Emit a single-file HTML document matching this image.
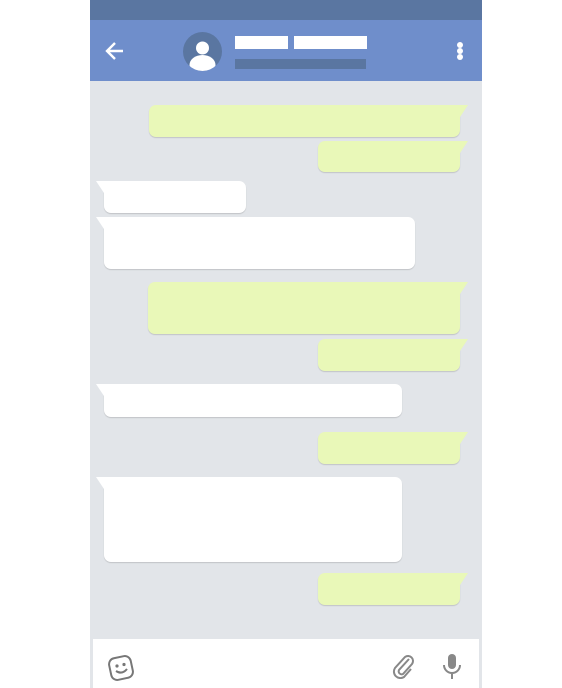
<!DOCTYPE html>
<html><head><meta charset="utf-8"><style>
html,body{margin:0;padding:0;width:562px;height:688px;background:#fff;overflow:hidden;font-family:"Liberation Sans",sans-serif}
.ph{position:absolute;left:90px;top:0;width:392px;height:688px;background:#e2e5e9}
.sb{position:absolute;left:0;top:0;width:392px;height:20px;background:#5a76a1}
.hd{position:absolute;left:0;top:20px;width:392px;height:61px;background:#6f8ecb}
.b{position:absolute;border-radius:7px;box-shadow:0 1px 1px rgba(0,0,0,.15)}
.g{background:#e9f8b8;border-top-right-radius:0}
.w{background:#fff;border-top-left-radius:0}
.g:after{content:"";position:absolute;right:-8px;top:0;width:8px;height:12px;background:#e9f8b8;clip-path:polygon(0 0,100% 0,0 100%)}
.w:before{content:"";position:absolute;left:-8px;top:0;width:8px;height:12px;background:#fff;clip-path:polygon(0 0,100% 0,100% 100%)}
.in{position:absolute;left:3px;top:639px;width:386px;height:49px;background:#fff}
</style></head><body>
<div class="ph">
<div class="sb"></div>
<div class="hd">
<svg style="position:absolute;left:14px;top:20px" width="22" height="22" viewBox="0 0 22 22"><path d="M19 11H4M11 3L3 11l8 8" stroke="#fff" stroke-width="2.4" fill="none"/></svg>
<svg style="position:absolute;left:93px;top:12px" width="39" height="39" viewBox="0 0 39 39"><defs><clipPath id="c"><circle cx="19.5" cy="19.5" r="19.5"/></clipPath></defs><circle cx="19.5" cy="19.5" r="19.5" fill="#5a76a1"/><g clip-path="url(#c)" fill="#fff"><circle cx="19.5" cy="16" r="6.5"/><ellipse cx="19.5" cy="33" rx="13" ry="10"/></g></svg>
<div style="position:absolute;left:145px;top:16px;width:53px;height:13px;background:#fff"></div>
<div style="position:absolute;left:204px;top:16px;width:73px;height:13px;background:#fff"></div>
<div style="position:absolute;left:145px;top:39px;width:131px;height:10px;background:#5a76a1"></div>
<div style="position:absolute;left:367px;top:22px;width:6px;height:6px;border-radius:3px;background:#fff;box-shadow:0 6px 0 #fff,0 12px 0 #fff"></div>
</div>
<div class="b g" style="left:59px;top:105px;width:311px;height:32px"></div>
<div class="b g" style="left:228px;top:141px;width:142px;height:31px"></div>
<div class="b w" style="left:14px;top:181px;width:142px;height:32px"></div>
<div class="b w" style="left:14px;top:217px;width:311px;height:52px"></div>
<div class="b g" style="left:58px;top:282px;width:312px;height:52px"></div>
<div class="b g" style="left:228px;top:339px;width:142px;height:32px"></div>
<div class="b w" style="left:14px;top:384px;width:298px;height:33px"></div>
<div class="b g" style="left:228px;top:432px;width:142px;height:32px"></div>
<div class="b w" style="left:14px;top:477px;width:298px;height:85px"></div>
<div class="b g" style="left:228px;top:573px;width:142px;height:32px"></div>
<div class="in">
<svg style="position:absolute;left:14px;top:14px" width="30" height="30" viewBox="0 0 30 30"><rect x="3" y="4" width="22" height="22" rx="6" transform="rotate(-12 14 15)" fill="none" stroke="#777" stroke-width="2"/><circle cx="10" cy="13" r="1.6" fill="#777"/><circle cx="17" cy="11.5" r="1.6" fill="#777"/><path d="M9 18q6 4 11-2" stroke="#777" stroke-width="2" fill="none"/></svg>
<svg style="position:absolute;left:297px;top:14px" width="26" height="26" viewBox="0 0 26 26"><path d="M19 6L9 17a3 3 0 0 0 4 4l9-10a5 5 0 0 0-7-7L5 15a6.5 6.5 0 0 0 9 9l7-8" stroke="#888" stroke-width="2" fill="none" transform="rotate(0)"/></svg>
<svg style="position:absolute;left:348px;top:14px" width="22" height="28" viewBox="0 0 22 28"><rect x="7" y="1" width="8" height="15" rx="4" fill="#888"/><path d="M3 12a8 8 0 0 0 16 0M11 20v6" stroke="#888" stroke-width="2" fill="none"/></svg>
</div>
</div>
</body></html>
